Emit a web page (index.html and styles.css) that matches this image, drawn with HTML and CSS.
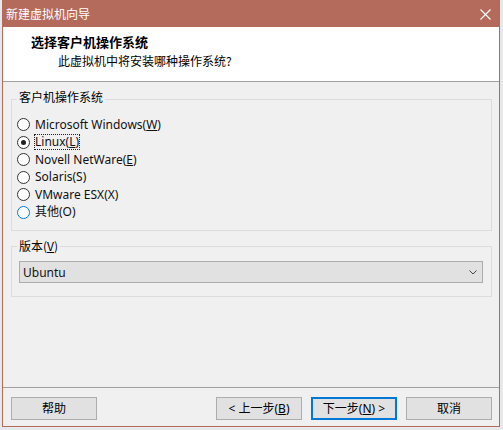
FILE: index.html
```html
<!DOCTYPE html>
<html lang="zh-CN">
<head>
<meta charset="utf-8">
<title>新建虚拟机向导</title>
<link rel="stylesheet" href="styles.css">
</head>
<body>
<div class="window">
  <div class="titlebar">
    <span class="title">新建虚拟机向导</span>
    <svg class="close" width="11" height="11" viewBox="0 0 11 11"><path d="M0.5 0.5L10.5 10.5M10.5 0.5L0.5 10.5" stroke="#fff" stroke-width="1.1" fill="none"/></svg>
  </div>
  <div class="header">
    <div class="h-title">选择客户机操作系统</div>
    <div class="h-sub">此虚拟机中将安装哪种操作系统?</div>
  </div>
  <div class="content">
    <div class="group group-os">
      <div class="group-title">客户机操作系统</div>
      <ul class="radios">
        <li class="radio"><span class="circle"></span><span class="lbl">Microsoft Windows(<u>W</u>)</span></li>
        <li class="radio"><span class="circle checked"></span><span class="lbl focus">Linux(<u>L</u>)</span></li>
        <li class="radio"><span class="circle"></span><span class="lbl">Novell NetWare(<u>E</u>)</span></li>
        <li class="radio"><span class="circle"></span><span class="lbl">Solaris(S)</span></li>
        <li class="radio"><span class="circle"></span><span class="lbl">VMware ESX(X)</span></li>
        <li class="radio"><span class="circle hover"></span><span class="lbl">其他(O)</span></li>
      </ul>
    </div>
    <div class="group group-ver">
      <div class="group-title">版本(<u>V</u>)</div>
      <div class="select">
        <span class="select-text">Ubuntu</span>
        <svg class="chevron" width="8" height="5" viewBox="0 0 8 5"><path d="M0.5 0.5L4 4L7.5 0.5" stroke="#444" stroke-width="1" fill="none"/></svg>
      </div>
    </div>
  </div>
  <div class="footer">
    <button class="btn">帮助</button>
    <span class="spacer"></span>
    <button class="btn">&lt; 上一步(<u>B</u>)</button>
    <button class="btn primary">下一步(<u>N</u>) &gt;</button>
    <button class="btn">取消</button>
  </div>
</div>
</body>
</html>
```

FILE: styles.css
```css
* { box-sizing: border-box; }
html, body { margin: 0; padding: 0; }
body {
  background: #e6e9ec;
  width: 503px;
  height: 430px;
  overflow: hidden;
  font-family: "Noto Sans", "Noto Sans CJK SC", sans-serif;
  font-size: 12px;
  color: #000;
}
.window {
  margin-left: 2px;
  width: 498px;
  height: 427px;
  background: #f0f0f0;
  border: 1px solid #b46b5c;
  border-top: none;
  display: flex;
  flex-direction: column;
}
.titlebar {
  height: 27px;
  background: #b46b5c;
  display: flex;
  align-items: center;
  padding: 0 8px 0 3px;
  color: #fff;
}
.title {
  flex: 1;
  font-family: "Noto Sans CJK SC", sans-serif;
  font-size: 12px;
  line-height: 16px;
}
.close { display: block; margin-top: 1px; }
.header {
  height: 55px;
  background: #fff;
  border-bottom: 1px solid #a0a0a0;
  padding-top: 6px;
}
.h-title {
  font-family: "Noto Sans CJK SC", sans-serif;
  font-weight: bold;
  font-size: 13px;
  line-height: 18px;
  padding-left: 28px;
}
.h-sub {
  font-family: "Noto Sans CJK SC", sans-serif;
  font-size: 12px;
  line-height: 16px;
  margin-top: 2px;
  padding-left: 55px;
}
.content {
  flex: 1;
  padding: 17px 7px 0 8px;
}
.group {
  border: 1px solid #dcdcdc;
}
.group-title {
  width: fit-content;
  background: #f0f0f0;
  padding: 0 2px;
  margin-left: 5px;
  line-height: 16px;
  font-family: "Noto Sans CJK SC", sans-serif;
}
.group-os .group-title { margin-top: -11px; }
.radios {
  list-style: none;
  margin: 0;
  padding: 11px 0 9px 5px;
}
.radio {
  height: 17.5px;
  display: flex;
  align-items: center;
}
.circle {
  width: 13px;
  height: 13px;
  border: 1px solid #333;
  border-radius: 50%;
  background: #fff;
  margin-right: 4px;
  position: relative;
  flex: none;
}
.circle.checked::after {
  content: "";
  position: absolute;
  left: 3px;
  top: 3px;
  width: 5px;
  height: 5px;
  border-radius: 50%;
  background: #222;
}
.circle.hover { border-color: #0078d7; }
.lbl {
  line-height: 14px;
  border: 1px dotted transparent;
  color: #111;
}
.lbl.focus { border-color: #222; }
.group-ver {
  margin-top: 15px;
  padding: 0 8px 13px 7px;
}
.group-ver .group-title { margin-top: -9px; margin-left: -2px; }
.select {
  margin-top: 7px;
  height: 22px;
  background: #e1e1e1;
  border: 1px solid #adadad;
  display: flex;
  align-items: center;
  padding: 0 5px 0 3px;
}
.select-text { flex: 1; color: #111; }
.chevron { display: block; margin-right: 0; }
.footer {
  height: 39px;
  border-top: 1px solid #a0a0a0;
  padding: 9px 7px 6px 8px;
  display: flex;
  gap: 9px;
}
.spacer { flex: 1; }
.btn {
  width: 86px;
  height: 23px;
  padding: 0;
  margin: 0;
  background: #e1e1e1;
  border: 1px solid #adadad;
  font-family: "Noto Sans", "Noto Sans CJK SC", sans-serif;
  font-size: 12px;
  color: #000;
  line-height: 16px;
}
.btn.primary { border: 2px solid #0078d7; }
```
